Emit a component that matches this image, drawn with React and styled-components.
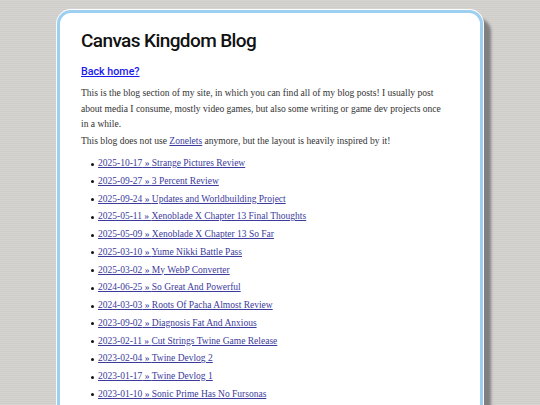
import React from "react";
import styled, { createGlobalStyle } from "styled-components";

const Global = createGlobalStyle`
  html, body { margin: 0; padding: 0; }
  body {
    background-color: #d3d1ce;
    background-image: repeating-linear-gradient(
      to bottom,
      #d6d4d1 0px, #d6d4d1 1px, #cfcdca 1px, #cfcdca 2px
    );
    min-height: 405px;
    overflow: hidden;
  }
`;

const Page = styled.div`
  padding-top: 10px;
  display: flex;
  justify-content: center;
`;

const Card = styled.main`
  width: 378px;
  background: #fff;
  border: 3px solid #9ccff0;
  border-radius: 14px;
  box-shadow: 0 0 0 1px #fff, 8px 8px 3px #808080;
  padding: 16px 21px 20px;
  color: #333;
  font-family: "Liberation Serif", serif;
`;

const Title = styled.h1`
  margin: 0 0 9px;
  font-family: Roboto, "Noto Sans", sans-serif;
  font-weight: 500;
  font-size: 19px;
  line-height: 23px;
  letter-spacing: -0.6px;
  color: #111;
`;

const BackLink = styled.a`
  display: inline-block;
  font-family: Roboto, "Noto Sans", sans-serif;
  font-weight: 500;
  font-size: 10.7px;
  line-height: 14px;
  color: #1a1aee;
  text-decoration: underline;
  margin-bottom: 6px;
`;

const Para = styled.p`
  margin: 0 0 ${(p) => p.$gap || 1.5}px;
  font-size: 9.55px;
  line-height: 15.5px;
`;

const InlineLink = styled.a`
  color: #3b3b9c;
  text-decoration: underline;
`;

const List = styled.ul`
  margin: 0;
  padding-left: 10px;
  list-style: none;
`;

const Item = styled.li`
  display: flex;
  align-items: flex-start;
  font-size: 9.5px;
  line-height: 15.5px;
  margin-bottom: 2.25px;
  color: #111;

  &::before {
    content: "";
    flex: none;
    width: 3px;
    height: 3px;
    margin: 6.5px 4px 0 0;
    border-radius: 50%;
    background: #111;
  }
`;

const PostLink = styled.a`
  color: #3b3b9c;
  text-decoration: underline;
`;

const posts = [
  ["2025-10-17", "Strange Pictures Review"],
  ["2025-09-27", "3 Percent Review"],
  ["2025-09-24", "Updates and Worldbuilding Project"],
  ["2025-05-11", "Xenoblade X Chapter 13 Final Thoughts"],
  ["2025-05-09", "Xenoblade X Chapter 13 So Far"],
  ["2025-03-10", "Yume Nikki Battle Pass"],
  ["2025-03-02", "My WebP Converter"],
  ["2024-06-25", "So Great And Powerful"],
  ["2024-03-03", "Roots Of Pacha Almost Review"],
  ["2023-09-02", "Diagnosis Fat And Anxious"],
  ["2023-02-11", "Cut Strings Twine Game Release"],
  ["2023-02-04", "Twine Devlog 2"],
  ["2023-01-17", "Twine Devlog 1"],
  ["2023-01-10", "Sonic Prime Has No Fursonas"],
];

export default function App() {
  return (
    <>
      <Global />
      <Page>
        <Card>
          <Title>Canvas Kingdom Blog</Title>
          <BackLink href="#">Back home?</BackLink>
          <Para>
            This is the blog section of my site, in which you can find all of my blog posts! I usually post
            <br />
            about media I consume, mostly video games, but also some writing or game dev projects once
            <br />
            in a while.
          </Para>
          <Para $gap={7.5}>
            This blog does not use <InlineLink href="#">Zonelets</InlineLink> anymore, but the layout is heavily inspired by it!
          </Para>
          <List>
            {posts.map(([d, t]) => (
              <Item key={d + t}>
                <PostLink href="#">{d} » {t}</PostLink>
              </Item>
            ))}
          </List>
        </Card>
      </Page>
    </>
  );
}
